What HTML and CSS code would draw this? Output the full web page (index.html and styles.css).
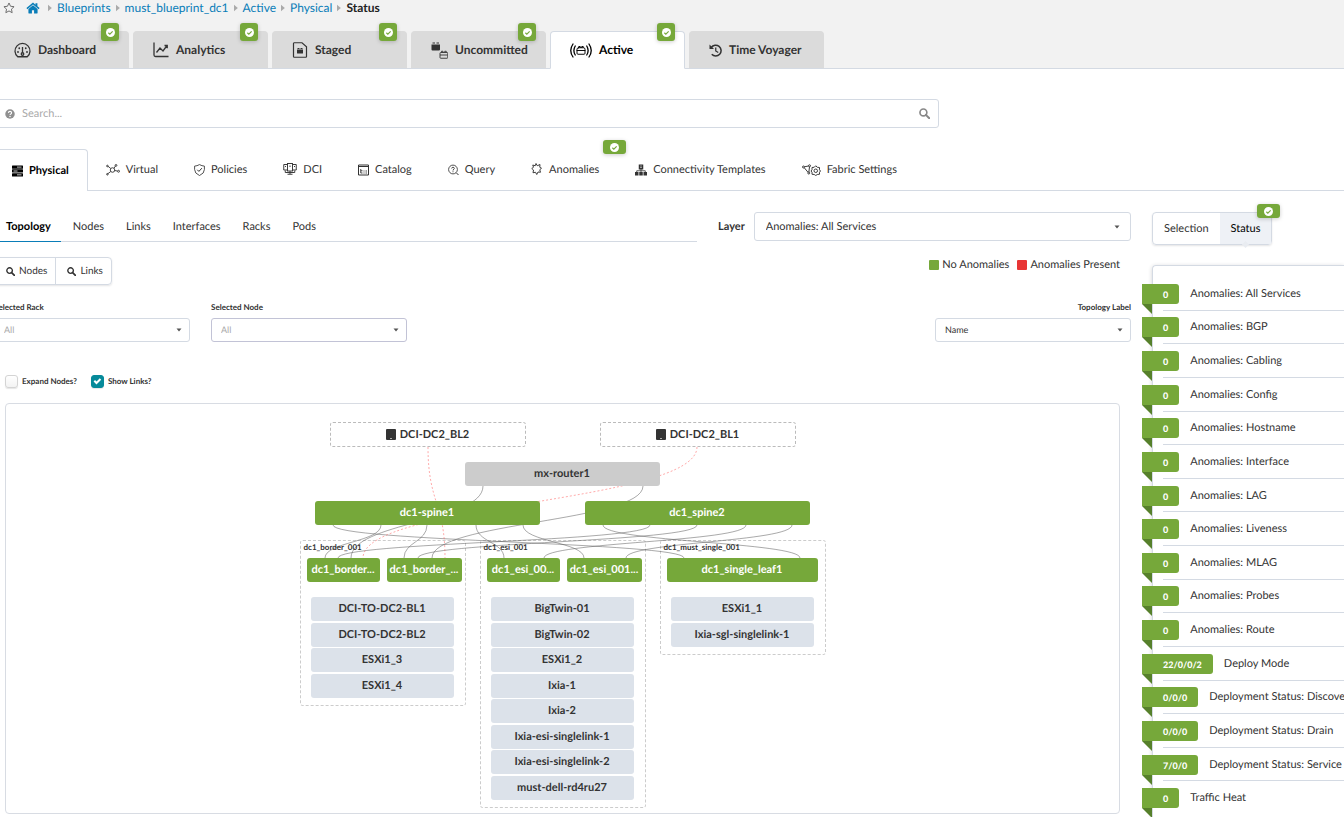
FILE: index.html
```html
<!DOCTYPE html>
<html lang="en">
<head>
<meta charset="utf-8">
<title>must_blueprint_dc1 - Active - Physical - Status</title>
<link rel="stylesheet" href="styles.css">
</head>
<body>
<svg class="defs" aria-hidden="true">
  <symbol id="ok" viewBox="0 0 16 16"><circle cx="8" cy="8" r="8" fill="#fff"/><path d="M4.2 8.4l2.6 2.5 5-5" fill="none" stroke="#76a83a" stroke-width="2"/></symbol>
  <symbol id="chev" viewBox="0 0 4 8"><path d="M0 0.8L3.8 4 0 7.2z" fill="#aaa"/></symbol>
  <symbol id="search" viewBox="0 0 16 16"><circle cx="6.4" cy="6.4" r="5" fill="none" stroke="currentColor" stroke-width="2.4"/><path d="M10 10l5 5" stroke="currentColor" stroke-width="3" stroke-linecap="round"/></symbol>
  <symbol id="device" viewBox="0 0 10 11"><rect width="10" height="11" rx="1" fill="#333"/><rect x="4" y="9" width="2" height="1" fill="#aaa"/></symbol>
</svg>

<header class="header">
  <nav class="crumbs" aria-label="Breadcrumb">
    <svg class="star" viewBox="0 0 22 22"><path d="M11 1.8l2.8 6 6.5.8-4.8 4.5 1.3 6.5L11 16.4l-5.8 3.2 1.3-6.5L1.7 8.6l6.5-.8z" fill="none" stroke="#666" stroke-width="1.7" stroke-linejoin="round"/></svg>
    <a href="#" class="home" aria-label="Home"><svg viewBox="0 0 26 22"><path d="M13 1L0.8 11.2l1.6 1.9L13 4.4l10.600 8.700 1.600-1.900-4-3.300V2h-3.600v3z M13 6L4.500 13v7.500q0 .8.8.8H11v-6h4v6h5.700q.8 0 .8-.8V13z" fill="#0a7db8"/></svg></a>
    <svg class="chev"><use href="#chev"/></svg>
    <a href="#">Blueprints</a><svg class="chev"><use href="#chev"/></svg>
    <a href="#">must_blueprint_dc1</a><svg class="chev"><use href="#chev"/></svg>
    <a href="#">Active</a><svg class="chev"><use href="#chev"/></svg>
    <a href="#">Physical</a><svg class="chev"><use href="#chev"/></svg>
    <span class="here">Status</span>
  </nav>
  <nav class="tabs" aria-label="Blueprint">
    <a href="#" class="tab"><svg class="i17" viewBox="0 0 34 30"><g fill="none" stroke="currentColor" stroke-width="2.600"><path d="M7.500 27.500A15 15 0 1 1 26.500 27.500z"/><circle cx="17" cy="22" r="2.500"/><path d="M17 19V8"/></g><g fill="currentColor"><circle cx="8" cy="18" r="1.800"/><circle cx="26" cy="18" r="1.800"/><circle cx="10.500" cy="10.500" r="1.800"/><circle cx="23.500" cy="10.500" r="1.800"/></g></svg>Dashboard<span class="badge"><svg><use href="#ok"/></svg></span></a>
    <a href="#" class="tab"><svg class="i16" viewBox="0 0 32 32"><path d="M2 1v25q0 3 3 3h26M7 21l7-9 6 6 8-11M23 7h5.500v5.500" fill="none" stroke="currentColor" stroke-width="2.600"/></svg>Analytics<span class="badge"><svg><use href="#ok"/></svg></span></a>
    <a href="#" class="tab"><svg class="i16" viewBox="0 0 32 32"><path d="M4 1.500h16l9 8V29q0 1.500-1.500 1.500h-23Q3 30.500 3 29V3q0-1.500 1.500-1.500z" fill="none" stroke="currentColor" stroke-width="2.400"/><path d="M11 12h4v2h-4zM17 12h4v2h-4zM10 15h12v7q0 1-1 1H11q-1 0-1-1z" fill="currentColor"/></svg>Staged<span class="badge"><svg><use href="#ok"/></svg></span></a>
    <a href="#" class="tab"><svg class="i17" viewBox="0 0 34 34"><path d="M3 1h5v2H3zM11 1h5v2h-5zM1 5h17v10q0 2-2 2H3q-2 0-2-2z" fill="currentColor"/><path d="M21 20.500v-2h3v2M27.500 20.500v-2h3v2M19.500 21h12.500q1.500 0 1.500 1.500V31q0 1.500-1.500 1.500H19.500Q18 32.500 18 31v-8.500q0-1.500 1.500-1.500zM18 26h15" fill="none" stroke="currentColor" stroke-width="1.800"/></svg>Uncommitted<span class="badge"><svg><use href="#ok"/></svg></span></a>
    <a href="#" class="tab active"><svg class="i22" viewBox="0 0 44 30"><g fill="none" stroke="currentColor" stroke-width="2.600" stroke-linecap="round"><path d="M6 2Q-3 15 6 28M10.500 6Q5 15 10.500 24M38 2Q47 15 38 28M33.500 6Q39 15 33.500 24"/><path d="M17.500 9V7h3v2M23.500 9V7h3v2M17 9.500h10q3 0 3 3v8q0 2-2 2H16q-2 0-2-2v-8q0-3 3-3zM14 15h16" stroke-width="1.900"/></g></svg>Active<span class="badge"><svg><use href="#ok"/></svg></span></a>
    <a href="#" class="tab"><svg class="i13" viewBox="0 0 26 26"><path d="M4.500 7A10.800 10.800 0 1 1 5.500 20.500" fill="none" stroke="currentColor" stroke-width="3"/><path d="M1 1v9h9z" fill="currentColor"/><path d="M13.500 7v7l5 3" fill="none" stroke="currentColor" stroke-width="2.500"/></svg>Time Voyager</a>
  </nav>
</header>

<main class="page">
  <label class="search">
    <svg class="help" viewBox="0 0 20 20"><circle cx="10" cy="10" r="9.500" fill="#909090"/><path d="M6.800 7.800Q7 4.800 10 4.800T13.200 7.500Q13.200 9 11.600 9.900T10 12" fill="none" stroke="#fff" stroke-width="2.200"/><circle cx="10" cy="14.900" r="1.500" fill="#fff"/></svg>
    <input type="text" placeholder="Search..." aria-label="Search">
    <svg class="glass"><use href="#search"/></svg>
  </label>

  <nav class="menu" aria-label="Active">
    <a href="#" class="item active"><svg class="i11" viewBox="0 0 22 22"><g fill="currentColor"><rect width="22" height="6.500" rx="1"/><rect y="7.700" width="22" height="6.500" rx="1"/><rect y="15.500" width="22" height="6.500" rx="1"/></g><path d="M10 3.200h9M3 11h8M10 18.700h9" stroke="#fff" stroke-width="1.500"/></svg>Physical</a>
    <a href="#" class="item"><svg class="i14" viewBox="0 0 28 24"><g fill="none" stroke="currentColor" stroke-width="1.800"><circle cx="13" cy="12" r="4.500"/><path d="M9.500 9L4 4.500M9.500 15L3 20M16 8.500L19 4M17.500 13l5 1"/><circle cx="2.800" cy="4" r="1.600"/><circle cx="2.800" cy="20.500" r="1.600"/><circle cx="20" cy="2.800" r="1.800"/><circle cx="25" cy="14.500" r="2"/></g></svg>Virtual</a>
    <a href="#" class="item"><svg class="i11" viewBox="0 0 22 24"><path d="M11 1.200Q6 4 1.200 4.200V11q0 8 9.800 12 9.800-4 9.800-12V4.200Q16 4 11 1.200z" fill="none" stroke="currentColor" stroke-width="1.700"/><path d="M6.500 11.500l3.300 3.300 6-6.500" fill="none" stroke="currentColor" stroke-width="2"/></svg>Policies</a>
    <a href="#" class="item raised"><svg class="i14" viewBox="0 0 28 24"><g fill="none" stroke="currentColor" stroke-width="1.900"><path d="M9 3H1.500v11H9M19 3h7.500v11H19"/><rect x="9" y="1" width="10" height="15"/><path d="M4.500 15v4h19v-4M14 16v6M5 6v2M14 5v3M23 6v2M9 22.500h10"/></g></svg>DCI</a>
    <a href="#" class="item"><svg class="i11" viewBox="0 0 22 22"><path d="M1 1h20v20H1zM1 4h20" fill="none" stroke="currentColor" stroke-width="2"/><path d="M5.500 9v8H9M5.500 12.500H9M11 13h2M15 13h3M11 17h2M15 17h3" fill="none" stroke="currentColor" stroke-width="1.800"/></svg>Catalog</a>
    <a href="#" class="item"><svg class="i11" viewBox="0 0 22 22"><circle cx="10" cy="10" r="8.800" fill="none" stroke="currentColor" stroke-width="1.700"/><path d="M16.500 16.500l4.500 4.500" stroke="currentColor" stroke-width="2"/><path d="M7.300 8Q7.300 5.500 10 5.500T12.700 8Q12.700 9.200 10 10.800V12M10 13.500v2" fill="none" stroke="currentColor" stroke-width="1.700"/></svg>Query</a>
    <a href="#" class="item wide raised"><svg class="i11" viewBox="0 0 22 24"><path d="M10 1l2.500 4.500L18 3l-.5 5.500 3.500 2-3.500 3 1.500 5-5-.5-2.500 5-2.500-4.500-5 1 1-5.500-3.500-3L5 8.500 3.500 4l5 1.500z" fill="none" stroke="currentColor" stroke-width="1.900" stroke-linejoin="round"/></svg>Anomalies<span class="badge flat"><svg><use href="#ok"/></svg></span></a>
    <a href="#" class="item"><svg class="i12" viewBox="0 0 24 22"><g fill="currentColor"><path d="M7.500 0h9v10h-9zM0 15h7v7H0zM8.500 15h7v7h-7zM17 15h7v7h-7z"/></g><path d="M12 9v7M3.500 16v-3.500h17V16" fill="none" stroke="currentColor" stroke-width="1.600"/><path d="M10 3h4M10 6h4" stroke="#fff"/></svg>Connectivity Templates</a>
    <a href="#" class="item"><svg class="i19" viewBox="0 0 38 24"><g fill="none" stroke="currentColor" stroke-width="1.900"><circle cx="3" cy="6" r="2"/><circle cx="15" cy="3.500" r="2"/><circle cx="13.500" cy="18" r="2"/><path d="M5 5.500l8-1.500M15 5.500L13.800 16M4.500 7.500L12 16.500"/><path d="M27.500 3.500l3 3 4.500.5 0 4.500 2 2.500-2 2.500v4l-4.500.5-3 2-3-2-4.500-.5v-4l-2-2.500 2-2.500V7l4.500-.5z"/><circle cx="27.500" cy="13.500" r="3.500"/></g></svg>Fabric Settings</a>
  </nav>

  <div class="columns">
    <section class="left">
      <div class="top">
        <nav class="subtabs" aria-label="Physical">
          <a href="#" class="active">Topology</a><a href="#">Nodes</a><a href="#">Links</a><a href="#">Interfaces</a><a href="#">Racks</a><a href="#">Pods</a>
        </nav>
        <div class="layer"><label for="layer">Layer</label><select id="layer" class="select big"><option>Anomalies: All Services</option></select></div>
      </div>
      <div class="tools">
        <div class="buttons find">
          <button type="button"><svg><use href="#search"/></svg>Nodes</button><button type="button"><svg><use href="#search"/></svg>Links</button>
        </div>
        <div class="legend"><span class="key good">No Anomalies</span><span class="key bad">Anomalies Present</span></div>
      </div>
      <div class="filters">
        <div class="field"><label for="rack">Selected Rack</label><select id="rack" class="select muted"><option>All</option></select></div>
        <div class="field"><label for="node">Selected Node</label><select id="node" class="select muted dark"><option>All</option></select></div>
        <div class="field last"><label for="label">Topology Label</label><select id="label" class="select"><option>Name</option></select></div>
      </div>
      <div class="checks">
        <label><input type="checkbox">Expand Nodes?</label>
        <label><input type="checkbox" checked>Show Links?</label>
      </div>
      <div class="canvas">
        <div class="stage">
          <div class="rack rack-border"></div><div class="rack rack-esi"></div><div class="rack rack-single"></div>
          <svg class="links" viewBox="0 0 526 408">
            <g class="wire">
              <path d="M183 82C183 118 51 118 51 154"/><path d="M343 82C343 118 132 118 132 154"/>
              <path d="M81 121C81 138 25 138 25 154"/><path d="M127 121C127 138 104 138 104 154"/><path d="M176 121C176 138 204 138 204 154"/><path d="M223 121C223 138 284 138 284 154"/><path d="M33 121C33 138 384 138 384 154"/>
              <path d="M303 121C303 138 500 138 500 154"/><path d="M350 121C350 138 38 138 38 154"/><path d="M397 121C397 138 118 138 118 154"/><path d="M446 121C446 138 244 138 244 154"/><path d="M492 121C492 138 326 138 326 154"/>
            </g>
            <g class="remote"><path d="M128 43C128 99 145 99 145 154"/><path d="M397 43C397 99 63 99 63 154"/></g>
          </svg>
          <div class="node remote-node bl2"><svg><use href="#device"/></svg>DCI-DC2_BL2</div>
          <div class="node remote-node bl1"><svg><use href="#device"/></svg>DCI-DC2_BL1</div>
          <div class="node router">mx-router1</div>
          <div class="node spine spine1">dc1-spine1</div>
          <div class="node spine spine2">dc1_spine2</div>
          <div class="group group-border">
            <div class="name">dc1_border_001</div>
            <div class="leaves"><div class="node leaf">dc1_border...</div><div class="node leaf">dc1_border_...</div></div>
            <div class="hosts four"><div class="node">DCI-TO-DC2-BL1</div><div class="node">DCI-TO-DC2-BL2</div><div class="node">ESXi1_3</div><div class="node">ESXi1_4</div></div>
          </div>
          <div class="group group-esi">
            <div class="name">dc1_esi_001</div>
            <div class="leaves"><div class="node leaf">dc1_esi_00...</div><div class="node leaf">dc1_esi_001...</div></div>
            <div class="hosts eight"><div class="node">BigTwin-01</div><div class="node">BigTwin-02</div><div class="node">ESXi1_2</div><div class="node">Ixia-1</div><div class="node">Ixia-2</div><div class="node">Ixia-esi-singlelink-1</div><div class="node">Ixia-esi-singlelink-2</div><div class="node">must-dell-rd4ru27</div></div>
          </div>
          <div class="group group-single">
            <div class="name">dc1_must_single_001</div>
            <div class="leaves one"><div class="node leaf">dc1_single_leaf1</div></div>
            <div class="hosts two"><div class="node">ESXi1_1</div><div class="node">Ixia-sgl-singlelink-1</div></div>
          </div>
        </div>
      </div>
    </section>

    <aside class="side">
      <div class="buttons modes">
        <button type="button">Selection</button><button type="button" class="on">Status<span class="badge flat"><svg><use href="#ok"/></svg></span></button>
      </div>
      <ul class="status">
        <li><span class="ribbon">0</span>Anomalies: All Services</li>
        <li><span class="ribbon">0</span>Anomalies: BGP</li>
        <li><span class="ribbon">0</span>Anomalies: Cabling</li>
        <li><span class="ribbon">0</span>Anomalies: Config</li>
        <li><span class="ribbon">0</span>Anomalies: Hostname</li>
        <li><span class="ribbon">0</span>Anomalies: Interface</li>
        <li><span class="ribbon">0</span>Anomalies: LAG</li>
        <li><span class="ribbon">0</span>Anomalies: Liveness</li>
        <li><span class="ribbon">0</span>Anomalies: MLAG</li>
        <li><span class="ribbon">0</span>Anomalies: Probes</li>
        <li><span class="ribbon">0</span>Anomalies: Route</li>
        <li><span class="ribbon">22/0/0/2</span>Deploy Mode</li>
        <li><span class="ribbon">0/0/0</span>Deployment Status: Discovery</li>
        <li><span class="ribbon">0/0/0</span>Deployment Status: Drain</li>
        <li><span class="ribbon">7/0/0</span>Deployment Status: Service</li>
        <li><span class="ribbon">0</span>Traffic Heat</li>
      </ul>
    </aside>
  </div>
</main>
</body>
</html>
```
FILE: styles.css
```css
* { box-sizing: border-box; }
body { margin: 0; overflow: hidden; background: #fff; color: #333; font: 11px/16px Lato, "Liberation Sans", sans-serif; text-rendering: geometricPrecision; }
a { color: inherit; text-decoration: none; }
button, input, select { font: inherit; color: inherit; text-rendering: inherit; }
.defs { position: absolute; width: 0; height: 0; }
svg { display: block; flex: none; }

.header { background: #f2f2f2; border-bottom: 1px solid #d4dae3; height: 69px; display: flex; flex-direction: column; justify-content: space-between; }
.crumbs { display: flex; align-items: center; height: 16px; padding-left: 3px; font-size: 12px; white-space: nowrap; }
.crumbs a { color: #0a7db8; }
.star { width: 12px; height: 12px; margin-right: 11px; }
.home svg { width: 14px; height: 12px; }
.chev { width: 4px; height: 8px; margin: 0 5px; }
.home + .chev { margin-left: 8px; }
.here { font-weight: 700; color: #222; }

.tabs { display: flex; gap: 4px; margin: 0 0 -1px -6px; }
.tab { position: relative; width: 135px; height: 38px; padding-left: 19px; display: flex; align-items: center; gap: 7px; background: #dbdbdb; border: 1px solid #dbdbdb; border-bottom-color: #d4dae3; border-radius: 4px 4px 0 0; font-size: 12px; font-weight: 700; white-space: nowrap; }
.tab.active { background: #fff; border-color: #d4dae3; border-bottom-color: #fff; color: #000; }
.badge { position: absolute; top: -9px; right: 9px; width: 18px; height: 18px; display: grid; place-items: center; background: #76a83a; border-radius: 3px; box-shadow: 0 1px 4px rgba(0,0,0,.2); }
.badge svg { width: 9px; height: 9px; }
.badge.flat { top: -9px; right: -9px; width: 23px; height: 14px; }
.i11 { width: 11px; height: 12px; }
.i12 { width: 12px; height: 12px; }
.i13 { width: 13px; height: 13px; }
.i14 { width: 14px; height: 12px; }
.i16 { width: 16px; height: 16px; }
.i17 { width: 17px; height: 17px; }
.i19 { width: 19px; height: 12px; }
.i22 { width: 22px; height: 15px; }

.page { margin-left: -6px; padding-top: 30px; }
.search { display: flex; align-items: center; width: 70%; height: 29px; padding: 0 8px 0 10px; border: 1px solid #d4dae3; border-radius: 3px; }
.search input { flex: 1; min-width: 0; border: 0; outline: 0; padding: 0 7px; background: none; }
.search input::placeholder { color: #aaa; }
.help { width: 10px; height: 10px; }
.glass { width: 11px; height: 11px; color: #888; }

.menu { display: flex; margin-top: 21px; height: 42px; border-bottom: 1px solid #d4dae3; font-size: 11px; white-space: nowrap; }
.item { position: relative; display: flex; align-items: center; gap: 6px; height: 42px; padding: 0 18px; border: 0 solid #d4dae3; }
.item.active { border-width: 1px 1px 0 0; border-radius: 0 4px 0 0; background: #fff; color: #000; font-weight: 700; }
.item.wide { gap: 7px; }
.item.raised svg { margin-bottom: 2px; }
.item .badge svg { margin: 0; }

.columns { display: flex; gap: 21px; padding-top: 21px; }
.left { flex: 1; min-width: 0; }
.side { flex: 0 0 192px; min-width: 0; }
.top { display: grid; grid-template-columns: 703fr 413fr; column-gap: 21px; }
.subtabs { display: flex; height: 30px; border-bottom: 1px solid #d4dae3; }
.subtabs a { padding: 7px 10px 0 12px; height: 30px; }
.subtabs .active { font-weight: 700; color: #000; border-bottom: 1px solid #0a7db8; }
.layer { display: flex; align-items: center; gap: 9px; height: 29px; }
.layer label { font-weight: 700; }
.select { appearance: none; width: 100%; height: 24px; padding: 0 9px; border: 1px solid #d4dae3; border-radius: 3px; outline: 0; font-size: 9px; background: #fff url("data:image/svg+xml,%3Csvg xmlns='http://www.w3.org/2000/svg' width='6' height='4'%3E%3Cpath d='M0.500 0.500h5L3 3.500z' fill='%23555'/%3E%3C/svg%3E") no-repeat right 7px center; }
.select.big { flex: 1; height: 29px; padding: 0 11px; font-size: 11px; background-position: right 10px center; }
.select.muted { color: #aaa; }
.select.dark { border-color: #c2c3d6; }

.tools { display: flex; justify-content: space-between; padding: 15px 11px 0 0; }
.buttons { display: inline-flex; border: 1px solid #d4dae3; border-radius: 4px; box-shadow: 0 1px 2px rgba(34,36,38,.12); }
.buttons button { position: relative; border: 0; background: none; display: flex; align-items: center; padding: 0 11px; }
.find { height: 28px; }
.find button { gap: 4px; padding: 0 8px 0 11px; font-size: 10px; }
.find button + button { border-left: 1px solid #d4dae3; }
.find svg { width: 9px; height: 9px; }
.legend { display: flex; gap: 8px; height: 16px; }
.key { display: flex; align-items: center; gap: 3px; }
.key::before { content: ""; width: 10px; height: 10px; border-radius: 1px; background: #76a83a; }
.key.bad::before { background: #e83535; }

.filters { display: flex; gap: 21px; padding-top: 16px; }
.field { width: 196px; }
.field label { display: block; height: 17px; line-height: 13px; font-size: 8px; font-weight: 700; }
.field.last { margin-left: auto; }
.field.last label { text-align: right; }
.checks { display: flex; gap: 14px; padding: 31px 0 0 11px; font-size: 8px; font-weight: 700; }
.checks label { display: flex; align-items: center; gap: 4px; height: 16px; }
.checks input { appearance: none; margin: 0; width: 13px; height: 13px; border: 1px solid #d4d4d4; border-radius: 3px; background: linear-gradient(#fff, #f3f3f3); box-shadow: 0 1px 1px rgba(0,0,0,.1); }
.checks input:checked { border-color: #068a9a; background: #068a9a url("data:image/svg+xml,%3Csvg xmlns='http://www.w3.org/2000/svg' width='9' height='8'%3E%3Cpath d='M1.300 3.700l2.200 2.300 4-4' fill='none' stroke='white' stroke-width='2'/%3E%3C/svg%3E") no-repeat center; }

.canvas { margin: 14px 11px 0; border: 1px solid #d8dce3; border-radius: 4px; }
.stage { position: relative; width: 526px; height: 409px; margin: 0 auto; }
.links { position: absolute; inset: 0; width: 526px; height: 408px; fill: none; }
.wire { stroke: #555; stroke-opacity: .5; }
.remote { stroke: #f55; stroke-opacity: .5; stroke-dasharray: 2 2; }
.node { height: 24px; display: flex; align-items: center; justify-content: center; border-radius: 3px; background: #dce2ea; font-weight: 700; white-space: nowrap; }
.remote-node, .router, .spine, .rack, .group { position: absolute; }
.remote-node { top: 18px; width: 196px; height: 25px; gap: 4px; background: #fff; border: 1px dashed #bbb; }
.remote-node svg { width: 10px; height: 11px; }
.bl2 { left: 30px; }
.bl1 { left: 300px; }
.router { top: 58px; left: 165px; width: 195px; background: #ccc; }
.spine { top: 97px; width: 225px; background: #76a83a; color: #fff; }
.spine1 { left: 15px; }
.spine2 { left: 285px; }
.rack { top: 136px; width: 166px; border: 1px dashed #ccc; border-radius: 3px; }
.group { top: 136px; width: 166px; }
.rack-border { left: 0; height: 166px; }
.rack-esi { left: 180px; height: 268px; }
.rack-single { left: 360px; height: 115px; }
.group-border { left: 0; }
.group-esi { left: 180px; }
.group-single { left: 360px; }
.name { height: 18px; line-height: 15px; padding-left: 4px; font-size: 8px; font-weight: 700; }
.leaves { display: grid; grid-template-columns: 73px 75px; gap: 7px; padding-left: 7px; }
.leaves.one { grid-template-columns: 151px; }
.leaf { background: #76a83a; color: #fff; }
.hosts { display: flex; flex-direction: column; justify-content: space-between; margin: 15px 12px 0 11px; }
.two { height: 50px; }
.four { height: 101px; }
.eight { height: 203px; }

.modes { height: 33px; }
.modes button:first-child { padding: 0 11px; }
.modes .on { background: #eef1f6; color: #000; }
.modes .on::after { content: ""; position: absolute; left: 50%; bottom: -3px; width: 5px; height: 5px; margin-left: -3px; transform: rotate(45deg); background: #e9ecf1; }
.status { list-style: none; margin: 20px 0 0; padding: 11px 0 10px 10px; height: 560px; border: solid #d4dae3; border-width: 1px 0 0 1px; border-radius: 4px 0 0 0; box-shadow: 0 1px 4px rgba(34,36,38,.2); display: grid; grid-template-rows: repeat(16, 1fr); }
.status li { position: relative; display: flex; align-items: center; gap: 11px; white-space: nowrap; }
.status li + li::before { content: ""; position: absolute; top: -1px; left: 0; right: 0; height: 1px; background: #d4dae3; }
.ribbon { position: relative; height: 20px; margin-left: -21px; padding: 0 11px 0 21px; line-height: 21px; background: #76a83a; color: #fff; border-radius: 0 3px 3px 0; font-size: 9px; font-weight: 900; }
.ribbon::after { content: ""; position: absolute; left: 0; top: 100%; border: solid transparent; border-width: 0 10px 10px 0; border-right-color: #56802b; }
```
